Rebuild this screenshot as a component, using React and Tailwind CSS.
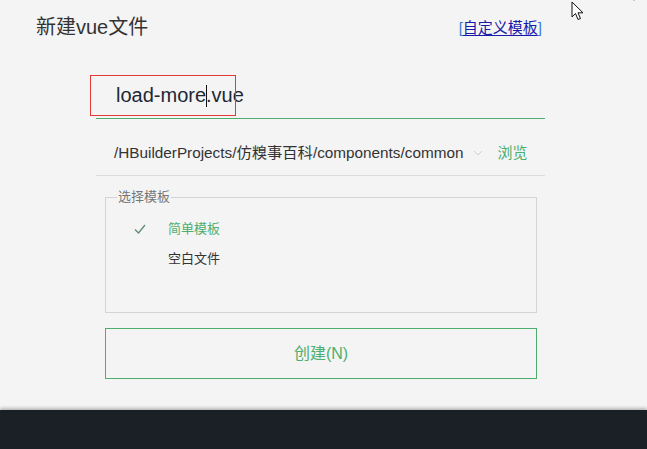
import React from 'react';

const FONT = { fontFamily: '"Liberation Sans", "Noto Sans CJK SC", sans-serif' };

export default function App() {
  return (
    <div className="w-[647px] h-[449px] overflow-hidden flex flex-col bg-[#f4f4f5] text-[#333]" style={FONT}>
      <div className="relative h-[410px] flex flex-col">
        {/* header */}
        <div className="flex items-start justify-between pl-[36px] pr-[105px] pt-[14px]">
          <h1 className="text-[20px] leading-[26px] text-[#333]">新建vue文件</h1>
          <a className="mt-[3px] text-[15px] leading-[22px] text-[#1a1aa8] underline underline-offset-2">
            <span className="text-[#3a7bd5]">[</span>自定义模板<span className="text-[#3a7bd5]">]</span>
          </a>
        </div>

        {/* cursor + close glyph */}
        <svg className="absolute left-[571px] top-[1px]" width="14" height="20" viewBox="0 0 14 20">
          <path d="M1 1 L1 16 L4.5 12.5 L7 18.5 L9.5 17.5 L7 11.8 L12 11.8 Z" fill="#fff" stroke="#111" strokeWidth="1" strokeLinejoin="round" />
        </svg>
        <svg className="absolute left-[627px] top-0" width="14" height="5" viewBox="0 0 14 5">
          <path d="M2 -4 L7 1 L12 -4" stroke="#c8c8c8" strokeWidth="1" fill="none" />
        </svg>

        {/* file name input */}
        <div className="ml-[96px] w-[449px] mt-[35px] border-b border-[#4caf6d] h-[44px] relative flex items-center">
          <div className="absolute left-[-6px] top-0 w-[146px] h-[41px] border border-[#e53935]" />
          <span className="ml-[20px] text-[20px] leading-[26px] text-[#1e2733] mb-[4px] whitespace-nowrap">
            load-more<span className="inline-block w-[1px] h-[22px] bg-[#111] align-middle -mx-[0.5px]" />.vue
          </span>
        </div>

        {/* path row */}
        <div className="ml-[96px] w-[449px] h-[57px] border-b border-[#dcdcdc] flex items-center pl-[18px] pt-[12px]">
          <span className="shrink-0 text-[15.3px] leading-[22px] text-[#333] whitespace-nowrap">/HBuilderProjects/仿糗事百科/components/common</span>
          <svg className="ml-[10px] shrink-0" width="10" height="6" viewBox="0 0 10 6">
            <path d="M1 1 L5 5 L9 1" stroke="#d0d0d0" strokeWidth="1" fill="none" />
          </svg>
          <span className="ml-[14px] shrink-0 whitespace-nowrap text-[15px] leading-[22px] text-[#4caf6d]">浏览</span>
        </div>

        {/* template fieldset */}
        <fieldset className="ml-[105px] w-[432px] h-[124px] mt-[13px] border border-[#d4d4d4] px-[10px] pt-[14px]">
          <legend className="ml-[1px] px-[1px] text-[13px] leading-[16px] text-[#777]">选择模板</legend>
          <div className="flex items-center h-[20px] pl-[18px]">
            <svg width="12" height="10" viewBox="0 0 12 10">
              <path d="M1 5.5 L4.5 9 L11 1" stroke="#5f8a72" strokeWidth="1.3" fill="none" />
            </svg>
            <span className="ml-[22px] text-[13px] leading-[18px] text-[#4caf6d]">简单模板</span>
          </div>
          <div className="flex items-center h-[20px] mt-[10px] pl-[52px]">
            <span className="text-[13px] leading-[18px] text-[#333]">空白文件</span>
          </div>
        </fieldset>

        {/* create button */}
        <button className="ml-[105px] w-[432px] h-[51px] mt-[15px] border border-[#4caf6d] flex items-center justify-center text-[16px] text-[#4caf6d]">
          创建(N)
        </button>
      </div>
      <div className="flex-1 bg-[#1b1f26] shadow-[0_-2px_3px_rgba(0,0,0,0.25)]" />
    </div>
  );
}
